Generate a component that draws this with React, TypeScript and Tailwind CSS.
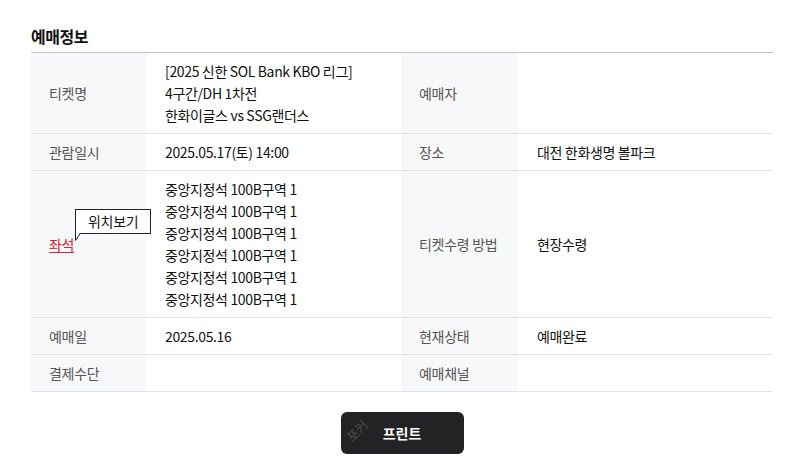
import React from 'react';

const font = { fontFamily: '"Noto Sans CJK KR", "Noto Sans", sans-serif' };

function Label({ children }: { children: React.ReactNode }) {
  return (
    <div className="flex items-center bg-[#f7f8fa] pl-[18px] py-[7px] text-[14px] leading-[22px] tracking-[-0.3px] text-[#555]">
      {children}
    </div>
  );
}

function Value({ children }: { children?: React.ReactNode }) {
  return (
    <div className="flex flex-col justify-center pl-[19px] py-[7px] text-[14px] leading-[22px] tracking-[-0.35px] text-[#111]">
      {children}
    </div>
  );
}

function Row({ children }: { children: React.ReactNode }) {
  return (
    <div className="grid grid-cols-[115px_255px_117px_1fr] border-b border-[#e4e4e6]">{children}</div>
  );
}

export default function App() {
  const seats = Array.from({ length: 6 }, () => '중앙지정석 100B구역 1');
  return (
    <div className="w-[789px] h-[471px] bg-white pl-[31px] pr-[16px] pt-[23px]" style={font}>
      <h2 className="text-[16px] leading-[26px] font-bold text-[#111] tracking-[-0.5px] pb-[3px]">예매정보</h2>
      <div className="border-t border-[#c4c4c4]">
        <Row>
          <Label>티켓명</Label>
          <Value>
            <span>[2025 신한 SOL Bank KBO 리그]</span>
            <span>4구간/DH 1차전</span>
            <span>한화이글스 vs SSG랜더스</span>
          </Value>
          <Label>예매자</Label>
          <Value />
        </Row>
        <Row>
          <Label>관람일시</Label>
          <Value>2025.05.17(토) 14:00</Value>
          <Label>장소</Label>
          <Value>대전 한화생명 볼파크</Value>
        </Row>
        <Row>
          <Label>
            <div className="relative">
              <span className="text-[#e0202a] underline underline-offset-2">좌석</span>
              <div className="absolute left-[26px] top-[-24px] border border-[#222] bg-white px-[12px] text-[14px] leading-[23px] text-[#111] whitespace-nowrap">
                위치보기
                <svg className="absolute left-[-1px] top-[23px]" width="6" height="8" viewBox="0 0 6 8">
                  <path d="M0.5 0 L0.5 7.5 L5.5 0" fill="white" stroke="#222" strokeWidth="1" />
                </svg>
              </div>
            </div>
          </Label>
          <Value>
            {seats.map((s, i) => (
              <span key={i}>{s}</span>
            ))}
          </Value>
          <Label>티켓수령 방법</Label>
          <Value>현장수령</Value>
        </Row>
        <Row>
          <Label>예매일</Label>
          <Value>2025.05.16</Value>
          <Label>현재상태</Label>
          <Value>예매완료</Value>
        </Row>
        <Row>
          <Label>결제수단</Label>
          <Value />
          <Label>예매채널</Label>
          <Value />
        </Row>
      </div>
      <div className="flex justify-center pt-[20px]">
        <button className="relative w-[123px] h-[42px] rounded-[6px] bg-[#232326] text-white text-[14px] font-bold">
          <span className="absolute left-[4px] top-[9px] -rotate-45 text-[13px] font-normal text-white/20">포커</span>
          프린트
        </button>
      </div>
    </div>
  );
}
